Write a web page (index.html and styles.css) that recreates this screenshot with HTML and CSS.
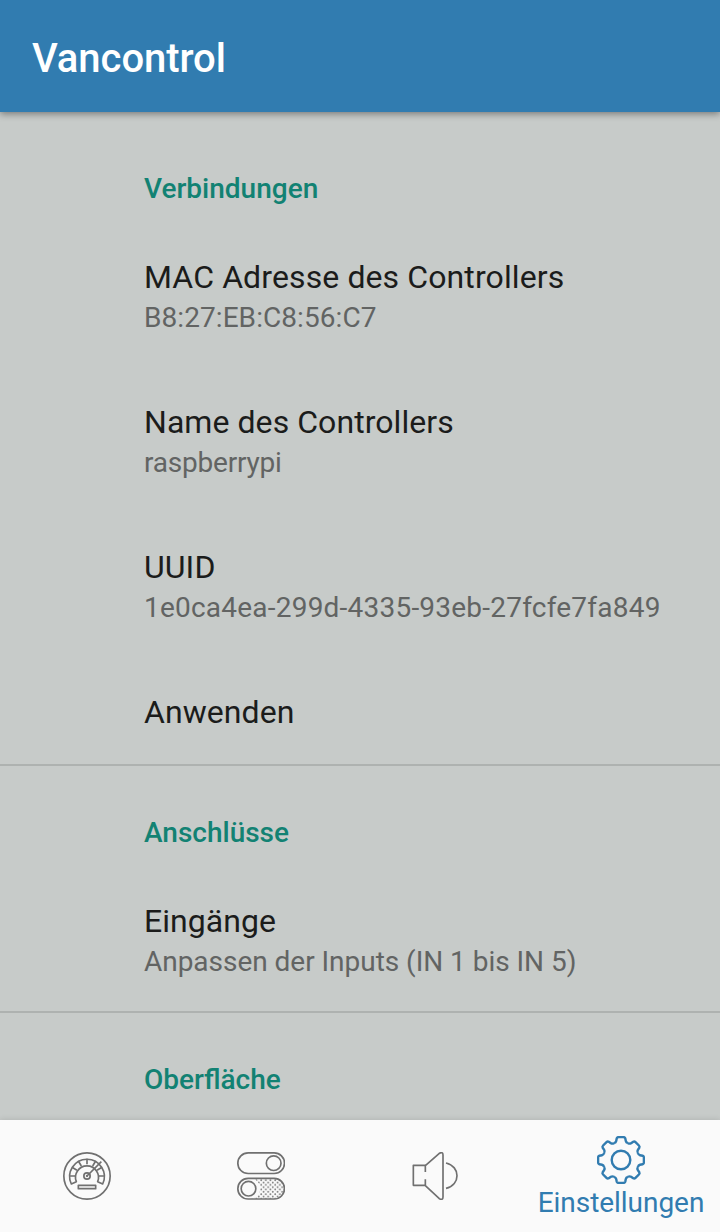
FILE: index.html
```html
<!DOCTYPE html>
<html lang="de">
<head>
<meta charset="utf-8">
<title>Vancontrol</title>
<link rel="stylesheet" href="styles.css">
</head>
<body>
<div class="app">
  <header class="app-bar"><h1 class="app-title">Vancontrol</h1></header>
  <main class="settings">
    <section class="group">
      <h2 class="group-title">Verbindungen</h2>
      <div class="item">
        <div class="item-title title-mac">MAC Adresse des Controllers</div>
        <div class="item-summary summary-mac">B8:27:EB:C8:56:C7</div>
      </div>
      <div class="item">
        <div class="item-title">Name des Controllers</div>
        <div class="item-summary summary-name">raspberrypi</div>
      </div>
      <div class="item">
        <div class="item-title">UUID</div>
        <div class="item-summary summary-uuid">1e0ca4ea-299d-4335-93eb-27fcfe7fa849</div>
      </div>
      <div class="item">
        <div class="item-title">Anwenden</div>
      </div>
    </section>
    <section class="group">
      <h2 class="group-title">Anschlüsse</h2>
      <div class="item">
        <div class="item-title">Eingänge</div>
        <div class="item-summary summary-inputs">Anpassen der Inputs (IN 1 bis IN 5)</div>
      </div>
    </section>
    <section class="group">
      <h2 class="group-title">Oberfläche</h2>
    </section>
  </main>
  <nav class="tabs">
    <a class="tab">
      <svg class="icon" viewBox="33 36 144 144">
        <circle cx="105" cy="108" r="69.500"/>
        <path d="M58 132A52 52 0 1 1 152 132L137 125A34.500 34.500 0 1 0 73 125Z"/>
        <path d="M53 108H70M60 82L75 91M79 63L88 78M105 56V73M131 63L122 78M135 91L150 82M140 108H157"/>
        <path d="M105 108L148 65"/>
        <circle cx="105" cy="108" r="9.500"/>
        <circle class="dot" cx="105" cy="108" r="3.500"/>
        <rect x="79" y="136" width="52" height="10"/>
      </svg>
    </a>
    <a class="tab">
      <svg class="icon" viewBox="33 36 144 144">
        <defs>
          <pattern id="dots" x="88" y="117" width="14" height="14" patternUnits="userSpaceOnUse">
            <circle class="dot" cx="3.500" cy="3.500" r="2.600"/>
            <circle class="dot" cx="10.500" cy="10.500" r="2.600"/>
          </pattern>
        </defs>
        <rect x="35.500" y="38.500" width="140" height="62" rx="31"/>
        <circle cx="143" cy="69.500" r="22"/>
        <path class="dotted" d="M72 115H144A31 31 0 0 1 144 177H72A31 31 0 0 0 72 115Z"/>
        <rect x="35.500" y="115" width="140" height="62" rx="31"/>
        <circle class="knob" cx="67.500" cy="146" r="22"/>
      </svg>
    </a>
    <a class="tab">
      <svg class="icon" viewBox="33 36 144 144">
        <path d="M76 96V76H40V136H76V118M76 77L118 40Q129 34 129 45V171Q129 182 118 176L76 137M138 69C182 79 182 135 138 145"/>
      </svg>
    </a>
    <a class="tab tab-active">
      <svg class="icon icon-gear" viewBox="-24 -24 48 48">
        <defs>
          <path id="tooth" d="M-7 -16.900C-5.600 -17.300 -5 -18 -4.800 -19L-4.300 -21.600Q-3.900 -22.900 -2.400 -22.900H2.400Q3.900 -22.900 4.300 -21.600L4.800 -19C5 -18 5.600 -17.300 7 -16.900"/>
        </defs>
        <use href="#tooth"/>
        <use href="#tooth" transform="rotate(45)"/>
        <use href="#tooth" transform="rotate(90)"/>
        <use href="#tooth" transform="rotate(135)"/>
        <use href="#tooth" transform="rotate(180)"/>
        <use href="#tooth" transform="rotate(225)"/>
        <use href="#tooth" transform="rotate(270)"/>
        <use href="#tooth" transform="rotate(315)"/>
        <circle r="9.300"/>
      </svg>
      <span class="tab-label">Einstellungen</span>
    </a>
  </nav>
</div>
</body>
</html>
```

FILE: styles.css
```css
* {
  box-sizing: border-box;
}

body {
  margin: 0;
  font-family: Roboto, sans-serif;
}

.app {
  display: flex;
  flex-direction: column;
  height: 1232px;
  overflow: hidden;
  background: #c7cbc9;
}

.app-bar {
  display: flex;
  align-items: center;
  flex: none;
  height: 112px;
  padding: 6px 32px 0;
  background: #317cb0;
  box-shadow: 0 2px 7px rgba(0, 0, 0, 0.4);
  z-index: 1;
}

.app-title {
  margin: 0;
  font-size: 40px;
  font-weight: 500;
  line-height: 48px;
  letter-spacing: -0.06px;
  color: #fff;
}

.settings {
  flex: 1;
  min-height: 0;
  padding-top: 8px;
  overflow: hidden;
}

.group + .group {
  box-shadow: inset 0 2px #aeb2b0;
}

.group-title {
  margin: 0;
  padding: 50px 32px 14px 144px;
  font-size: 28px;
  font-weight: 500;
  line-height: 38px;
  font-kerning: normal;
  color: #128273;
}

.item {
  padding: 34px 32px 30px 144px;
  white-space: nowrap;
}

.item-title {
  font-size: 32px;
  line-height: 43px;
  letter-spacing: 0.06px;
  color: #1b1c1b;
}

.item-summary {
  font-size: 28px;
  line-height: 38px;
  color: #626463;
}

.title-mac {
  letter-spacing: 0.11px;
}

.summary-mac {
  letter-spacing: 0.07px;
}

.summary-name {
  letter-spacing: -0.2px;
}

.summary-uuid {
  letter-spacing: 0.22px;
}

.summary-inputs {
  letter-spacing: -0.03px;
}

.tabs {
  display: grid;
  grid-template-columns: 174px 174px 174px 198px;
  flex: none;
  height: 112px;
  background: #fafafa;
  box-shadow: 0 0 6px rgba(0, 0, 0, 0.14);
  z-index: 1;
}

.tab {
  display: flex;
  flex-direction: column;
  align-items: center;
  justify-content: center;
  color: #707070;
}

.tab-active {
  justify-content: flex-start;
  padding-top: 16px;
  color: #317cb0;
}

.tab-label {
  margin-top: 1px;
  font-size: 28px;
  line-height: 36px;
  letter-spacing: -0.04px;
}

.icon {
  flex: none;
  width: 48px;
  height: 48px;
  fill: none;
  stroke: currentColor;
  stroke-width: 5;
  stroke-linejoin: round;
}

.icon-gear {
  stroke-width: 2.4;
}

.dot {
  fill: #707070;
  stroke: none;
}

.dotted {
  fill: url(#dots);
  stroke: none;
}

.knob {
  fill: #fafafa;
}
```
